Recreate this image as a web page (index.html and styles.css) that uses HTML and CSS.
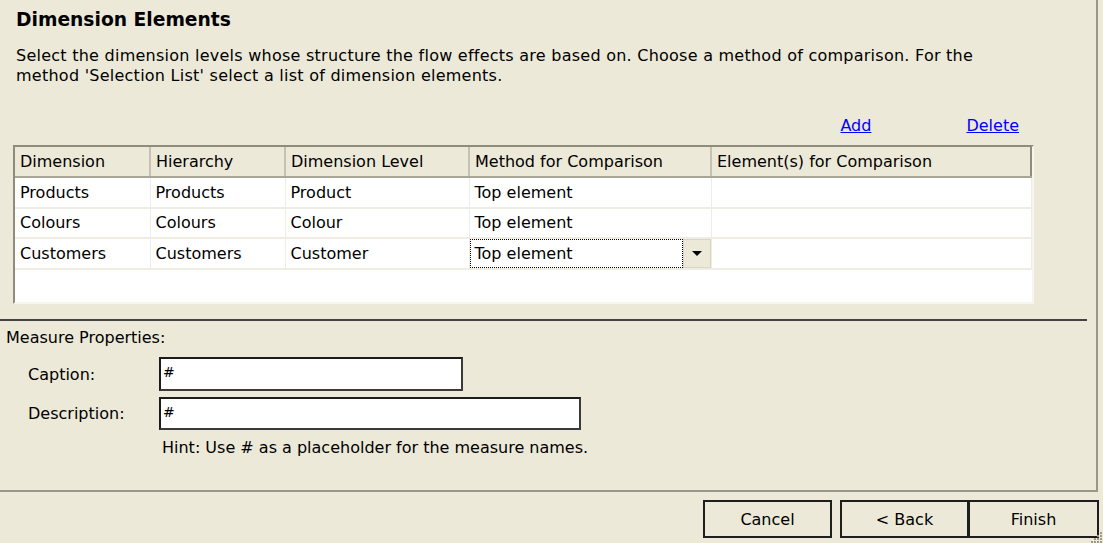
FILE: index.html
```html
<!DOCTYPE html>
<html>
<head>
<meta charset="utf-8">
<title>Dimension Elements</title>
<link rel="stylesheet" href="styles.css">
</head>
<body>
<div class="panel">
  <h1 class="title">Dimension Elements</h1>
  <p class="desc">Select the dimension levels whose structure the flow effects are based on. Choose a method of comparison. For the<br>method 'Selection List' select a list of dimension elements.</p>
  <div class="links">
    <a class="link link-add" href="#">Add</a>
    <a class="link link-del" href="#">Delete</a>
  </div>
  <div class="grid">
    <table class="tbl">
      <colgroup>
        <col class="c1"><col class="c2"><col class="c3"><col class="c4"><col class="c5">
      </colgroup>
      <thead>
        <tr>
          <th>Dimension</th><th>Hierarchy</th><th>Dimension Level</th><th>Method for Comparison</th><th>Element(s) for Comparison</th>
        </tr>
      </thead>
      <tbody>
        <tr><td>Products</td><td>Products</td><td>Product</td><td>Top element</td><td></td></tr>
        <tr><td>Colours</td><td>Colours</td><td>Colour</td><td>Top element</td><td></td></tr>
        <tr><td>Customers</td><td>Customers</td><td>Customer</td>
          <td class="combo-cell"><div class="combo"><span class="combo-text">Top element</span><span class="combo-btn"><svg width="12" height="7" viewBox="0 0 12 7"><path d="M1 1h10L6 6z" fill="#000"/></svg></span></div></td>
          <td></td></tr>
      </tbody>
    </table>
  </div>
  <div class="sep"></div>
  <div class="section-label">Measure Properties:</div>
  <div class="field field-caption">
    <span class="field-label">Caption:</span>
    <div class="input input-caption">#</div>
  </div>
  <div class="field field-desc">
    <span class="field-label">Description:</span>
    <div class="input input-desc">#</div>
  </div>
  <div class="hint">Hint: Use # as a placeholder for the measure names.</div>
</div>
<div class="buttons">
  <button class="btn btn-cancel">Cancel</button>
  <div class="btn-pair">
    <button class="btn btn-back">&lt; Back</button>
    <button class="btn btn-finish">Finish</button>
  </div>
  <svg class="grip" width="14" height="14" viewBox="0 0 14 14">
    <g fill="#9e9b8c">
      <rect x="11" y="2" width="2" height="2"/>
      <rect x="8" y="5" width="2" height="2"/><rect x="11" y="5" width="2" height="2"/>
      <rect x="5" y="8" width="2" height="2"/><rect x="8" y="8" width="2" height="2"/><rect x="11" y="8" width="2" height="2"/>
      <rect x="2" y="11" width="2" height="2"/><rect x="5" y="11" width="2" height="2"/><rect x="8" y="11" width="2" height="2"/><rect x="11" y="11" width="2" height="2"/>
    </g>
  </svg>
</div>
</body>
</html>
```

FILE: styles.css
```css
html, body {
  margin: 0;
  padding: 0;
  background: #ECE9D8;
  width: 1103px;
  height: 543px;
  overflow: hidden;
  font-family: "DejaVu Sans", Verdana, sans-serif;
  font-size: 16px;
  color: #000;
}

.panel {
  width: 1096px;
  height: 490px;
  box-sizing: content-box;
  border-right: 2px solid #9a978a;
  border-bottom: 2px solid #9a978a;
  display: flex;
  flex-direction: column;
}

.title {
  margin: 10px 0 0 16px;
  font-size: 18.7px;
  font-weight: bold;
  line-height: 20px;
}

.desc {
  margin: 16px 0 0 16px;
  line-height: 20px;
  letter-spacing: 0.25px;
}

.links {
  margin-top: 30px;
  height: 20px;
  line-height: 20px;
  display: flex;
  justify-content: flex-end;
  padding-right: 77px;
  gap: 95px;
}

.link {
  color: #0000ff;
  text-decoration: underline;
}

.grid {
  margin: 9px 0 0 13px;
  width: 1021px;
  height: 159px;
  box-sizing: border-box;
  border-top: 2px solid #8f8c7e;
  border-left: 2px solid #8f8c7e;
  border-right: 2px solid #f6f5ee;
  border-bottom: 2px solid #f6f5ee;
  background: #fff;
  overflow: hidden;
}

.tbl {
  border-collapse: collapse;
  table-layout: fixed;
  width: 1016px;
}

.c1 { width: 135px; }
.c2 { width: 135px; }
.c3 { width: 184px; }
.c4 { width: 242px; }
.c5 { width: 320px; }

.tbl th {
  height: 30px;
  box-sizing: border-box;
  background: #ECE9D8;
  font-weight: normal;
  text-align: left;
  padding: 0 0 0 5px;
  border-right: 2px solid #c5c2b2;
  border-bottom: 2px solid #a9a697;
  white-space: nowrap;
  overflow: hidden;
}

.tbl th:last-child {
  border-right: 2px solid #8f8c7e;
}

.tbl td {
  height: 30.5px;
  box-sizing: border-box;
  padding: 0 0 0 5px;
  border-right: 1px solid #efede3;
  border-bottom: 2px solid #efede3;
  white-space: nowrap;
}

.tbl td.combo-cell {
  padding: 0;
}

.combo {
  display: flex;
  height: 29px;
}

.combo-text {
  flex: 1;
  border: 1px dotted #000;
  padding-left: 4px;
  line-height: 27px;
}

.combo-btn {
  width: 28px;
  background: #ECE9D8;
  border: 1px solid #d8d5c6;
  box-sizing: border-box;
  display: flex;
  align-items: center;
  justify-content: center;
}

.sep {
  margin-top: 15px;
  width: 1087px;
  height: 2px;
  background: #444;
  flex: none;
}

.section-label {
  margin: 7px 0 0 6px;
  line-height: 20px;
}

.field {
  display: flex;
  align-items: center;
  padding-left: 28px;
}

.field-caption { margin-top: 9px; }
.field-desc { margin-top: 6px; }

.field-label {
  width: 131px;
  flex: none;
}

.input {
  box-sizing: border-box;
  border: 2px solid #1c1c1c;
  border-right-color: #3a3a3a;
  border-bottom-color: #3a3a3a;
  background: #fff;
  font-size: 14px;
  padding-left: 2px;
  line-height: 22px;
  padding-top: 2px;
}

.input-caption { width: 304px; height: 34px; }
.input-desc { width: 422px; height: 33px; }

.hint {
  margin: 8px 0 0 162px;
  line-height: 20px;
}

.buttons {
  position: relative;
  display: flex;
  justify-content: flex-end;
  gap: 8px;
  margin-top: 8px;
  padding-right: 4px;
}

.btn-pair {
  display: flex;
}

.btn {
  font-family: "DejaVu Sans", Verdana, sans-serif;
  font-size: 16px;
  color: #000;
  background: #ECE9D8;
  height: 38px;
  width: 129px;
  border: 2px solid #1e1e1e;
  padding: 0;
  margin: 0;
}

.btn-back {
  width: 130px;
  border-right-width: 3px;
}

.btn-finish {
  border-left: none;
  width: 129px;
}

.grip {
  position: absolute;
  right: 0;
  bottom: -6px;
}
```
